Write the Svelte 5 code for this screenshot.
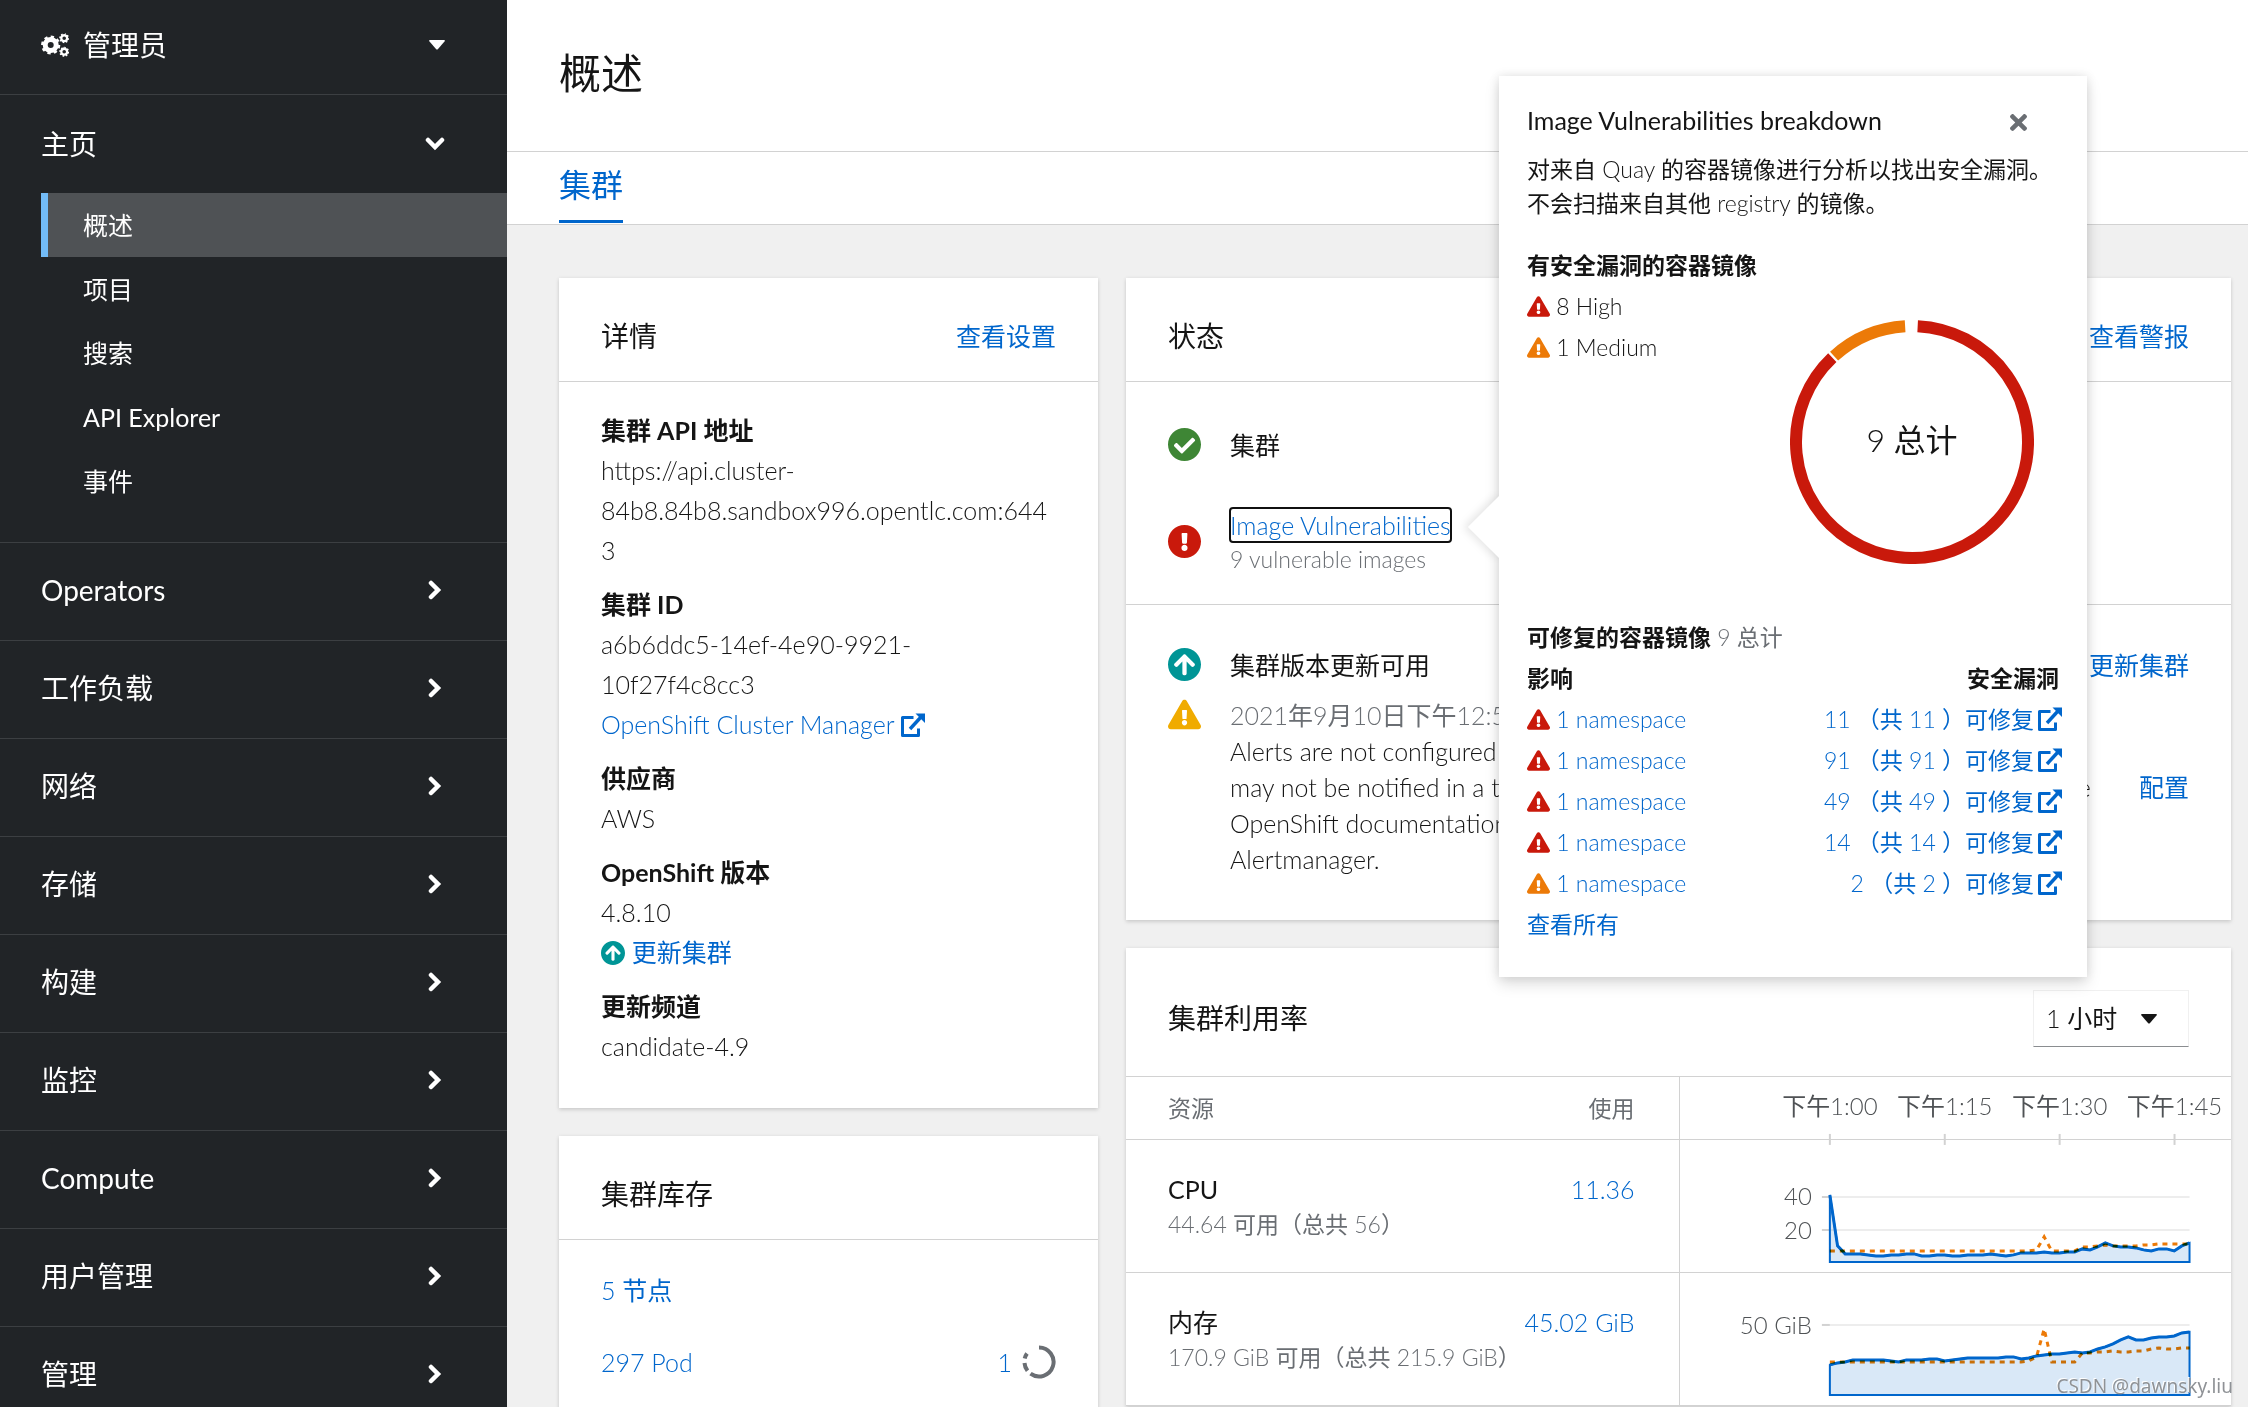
<script lang="ts">
  const sections = ['Operators', '工作负载', '网络', '存储', '构建', '监控', 'Compute', '用户管理', '管理'];
  const homeItems = ['概述', '项目', '搜索', 'API Explorer', '事件'];

  const fixable = [
    { level: 'high', count: 11 },
    { level: 'high', count: 91 },
    { level: 'high', count: 49 },
    { level: 'high', count: 14 },
    { level: 'medium', count: 2 },
  ];

  let active = $state('概述');
  let homeOpen = $state(true);
  let popoverOpen = $state(true);
  let duration = $state('1h');

  // chart geometry, one svg per table cell
  const X0 = 150;
  const X1 = 510;
  const STEP = (X1 - X0) / 47;

  const timeTicks = [
    { x: 150, label: '下午1:00' },
    { x: 265, label: '下午1:15' },
    { x: 380, label: '下午1:30' },
    { x: 495, label: '下午1:45' },
  ];

  // heights above the baseline, one sample each minute
  const cpuUsed = [67, 16, 8, 8, 8, 7, 6, 6, 7, 7, 8, 8, 6, 6, 7, 7, 6, 6, 7, 7, 7, 8, 7, 6, 7, 9, 9, 9, 10, 9, 9, 10, 10, 13, 12, 15, 19, 16, 15, 15, 14, 12, 11, 13, 13, 11, 16, 19];
  const cpuRequested = [...Array(27).fill(11), 12, 25, 11, 11, 11, 11, 15, 15, 16, 17, 16, 16, 16, 16, 17, 17, 18, 18, 18, 18, 18];
  const memUsed = [30, 32, 33, 35, 35, 35, 35, 35, 34, 33, 35, 35, 35, 36, 36, 34, 35, 36, 37, 37, 37, 37, 37, 38, 38, 36, 37, 39, 40, 41, 41, 42, 43, 42, 43, 46, 48, 51, 55, 58, 55, 55, 57, 58, 58, 59, 62, 63];
  const memRequested = [...Array(26).fill(33), 34, 38, 66, 33, 33, 33, 33, 42, 42, 43, 43, 44, 43, 43, 44, 44, 46, 47, 46, 46, 47, 47];

  function line(values: number[], base: number) {
    return values.map((v, i) => `${i ? 'L' : 'M'}${(X0 + i * STEP).toFixed(1)} ${base - v}`).join('');
  }

  function area(values: number[], base: number) {
    return `${line(values, base)}L${X1} ${base}L${X0} ${base}Z`;
  }

  function arc(from: number, to: number) {
    const point = (deg: number) => {
      const a = ((deg - 90) * Math.PI) / 180;
      return `${(122 + 116 * Math.cos(a)).toFixed(2)} ${(122 + 116 * Math.sin(a)).toFixed(2)}`;
    };
    return `M${point(from)}A116 116 0 ${to - from > 180 ? 1 : 0} 1 ${point(to)}`;
  }
</script>

{#snippet warning(kind: string)}
  <svg class="icon {kind}" viewBox="0 0 576 512" aria-hidden="true">
    <path d="M569.517 440.013C587.975 472.007 564.806 512 527.94 512H48.054c-36.937 0-59.999-40.055-41.577-71.987L246.423 23.985c18.467-32.009 64.72-31.951 83.154 0l239.94 416.028zM288 354c-25.405 0-46 20.595-46 46s20.595 46 46 46 46-20.595 46-46-20.595-46-46-46zm-43.673-165.346l7.418 136c.347 6.364 5.609 11.346 11.982 11.346h48.546c6.373 0 11.635-4.982 11.982-11.346l7.418-136c.375-6.874-5.098-12.654-11.982-12.654h-63.383c-6.884 0-12.356 5.78-11.981 12.654z" />
  </svg>
{/snippet}

{#snippet arrowUp()}
  <svg class="icon update" viewBox="8 8 496 496" aria-hidden="true">
    <path d="M8 256C8 119 119 8 256 8s248 111 248 248-111 248-248 248S8 393 8 256zm143.6 28.9l72.4-75.5V392c0 13.3 10.7 24 24 24h16c13.3 0 24-10.7 24-24V209.4l72.4 75.5c9.3 9.7 24.8 9.9 34.3.4l10.9-11c9.4-9.4 9.4-24.6 0-33.9L273 107.7c-9.4-9.4-24.6-9.4-33.9 0L106.3 240.4c-9.4 9.4-9.4 24.6 0 33.9l10.9 11c9.6 9.5 25.1 9.3 34.4-.4z" />
  </svg>
{/snippet}

{#snippet external()}
  <svg class="external" viewBox="0 0 24 24" aria-hidden="true">
    <path d="M12.5 4.500H1.500v18h16v-7" fill="none" stroke="currentColor" stroke-width="3" stroke-linejoin="round" />
    <path d="M9 16 20 4" fill="none" stroke="currentColor" stroke-width="3.4" />
    <path d="M14.5 0.500H24v9.500z" fill="currentColor" />
  </svg>
{/snippet}

{#snippet chevron(down: boolean)}
  <svg class="chevron" class:down viewBox="0 0 20 20" aria-hidden="true">
    <path d="M6 3l7 7-7 7" fill="none" stroke="currentColor" stroke-width="4.500" stroke-linecap="round" />
  </svg>
{/snippet}

{#snippet gear(cx: number, cy: number, r: number, w: number, tooth: number)}
  <circle {cx} {cy} {r} fill="none" stroke="currentColor" stroke-width={w} />
  <circle {cx} {cy} r={r + w / 2} fill="none" stroke="currentColor" stroke-width={tooth} pathLength="16" stroke-dasharray="1 1" />
{/snippet}

<div class="shell">
  <aside class="sidebar">
    <button class="perspective">
      <svg class="cogs" viewBox="0 0 28 28" aria-hidden="true">
        {@render gear(9.7, 14, 5.5, 5, 3.2)}
        {@render gear(23.2, 7.2, 2.9, 2.2, 2)}
        {@render gear(23.2, 20.8, 2.9, 2.2, 2)}
      </svg>
      <span>管理员</span>
      <svg class="caret" viewBox="0 0 16 10" aria-hidden="true"><path d="M1 0h14q1.500 0 .5 1.500L9 9q-1 1-2 0L.5 1.500Q-.5 0 1 0z" /></svg>
    </button>
    <nav>
      <div class="section">
        <button class="toggle" onclick={() => (homeOpen = !homeOpen)}>
          主页
          {@render chevron(homeOpen)}
        </button>
        {#if homeOpen}
          <ul>
            {#each homeItems as item}
              <li><a href="#{item}" class:active={active === item} onclick={() => (active = item)}>{item}</a></li>
            {/each}
          </ul>
        {/if}
      </div>
      {#each sections as name}
        <div class="section">
          <button class="toggle">
            {name}
            {@render chevron(false)}
          </button>
        </div>
      {/each}
    </nav>
  </aside>

  <main>
    <header><h1>概述</h1></header>
    <div class="tabs"><a href="#cluster">集群</a></div>

    <div class="dashboard">
      <div class="column">
        <section class="card">
          <div class="card-head">
            <h2>详情</h2>
            <a href="#settings">查看设置</a>
          </div>
          <dl>
            <dt>集群 API 地址</dt>
            <dd>https://api.cluster-84b8.84b8.sandbox996.opentlc.com:6443</dd>
            <dt>集群 ID</dt>
            <dd>a6b6ddc5-14ef-4e90-9921-10f27f4c8cc3</dd>
            <dd><a href="#manager">OpenShift Cluster Manager {@render external()}</a></dd>
            <dt>供应商</dt>
            <dd>AWS</dd>
            <dt>OpenShift 版本</dt>
            <dd>4.8.10</dd>
            <dd><a href="#update">{@render arrowUp()} 更新集群</a></dd>
            <dt>更新频道</dt>
            <dd>candidate-4.9</dd>
          </dl>
        </section>

        <section class="card stock">
          <div class="card-head"><h2>集群库存</h2></div>
          <div class="inventory">
            <a href="#nodes">5 节点</a>
          </div>
          <div class="inventory">
            <a href="#pods">297 Pod</a>
            <a class="progress" href="#pending">
              1
              <svg viewBox="0 0 34 34" aria-hidden="true">
                <path d="M17 2.500A14.500 14.500 0 1 1 8.500 28.700" />
                <path d="M5.500 25.800A14.500 14.500 0 0 1 2.500 18" />
                <path d="M2.700 13.500A14.500 14.500 0 0 1 5 8.500" />
              </svg>
            </a>
          </div>
        </section>
      </div>

      <div class="column">
        <section class="card">
          <div class="card-head">
            <h2>状态</h2>
            <a href="#alerts">查看警报</a>
          </div>
          <div class="health">
            <div class="health-item">
              <svg class="icon ok" viewBox="8 8 496 496" aria-hidden="true">
                <path d="M504 256c0 136.967-111.033 248-248 248S8 392.967 8 256 119.033 8 256 8s248 111.033 248 248zM227.314 387.314l184-184c6.248-6.248 6.248-16.379 0-22.627l-22.627-22.627c-6.248-6.249-16.379-6.249-22.628 0L216 308.118l-70.059-70.059c-6.248-6.248-16.379-6.248-22.628 0l-22.627 22.627c-6.248 6.248-6.248 16.379 0 22.627l104 104c6.249 6.249 16.379 6.249 22.628.001z" />
              </svg>
              <span>集群</span>
            </div>
            <div class="health-item">
              <svg class="icon high" viewBox="8 8 496 496" aria-hidden="true">
                <path d="M504 256c0 136.997-111.043 248-248 248S8 392.997 8 256C8 119.083 119.043 8 256 8s248 111.083 248 248zm-248 50c-25.405 0-46 20.595-46 46s20.595 46 46 46 46-20.595 46-46-20.595-46-46-46zm-43.673-165.346l7.418 136c.347 6.364 5.609 11.346 11.982 11.346h48.546c6.373 0 11.635-4.982 11.982-11.346l7.418-136c.375-6.874-5.098-12.654-11.982-12.654h-63.383c-6.884 0-12.356 5.78-11.981 12.654z" />
              </svg>
              <div class="vulnerabilities">
                <button class="vuln-link" onclick={() => (popoverOpen = !popoverOpen)}>Image Vulnerabilities</button>
                <small>9 vulnerable images</small>

                {#if popoverOpen}
                  <div class="popover" role="dialog" aria-label="Image Vulnerabilities breakdown">
                    <div class="popover-head">
                      <h3>Image Vulnerabilities breakdown</h3>
                      <button class="close" aria-label="Close" onclick={() => (popoverOpen = false)}>
                        <svg viewBox="0 80 352 352" aria-hidden="true">
                          <path d="M242.72 256l100.07-100.07c12.28-12.28 12.28-32.19 0-44.48l-22.24-22.24c-12.28-12.28-32.19-12.28-44.48 0L176 189.28 75.93 89.21c-12.28-12.28-32.19-12.28-44.48 0L9.21 111.45c-12.28 12.28-12.28 32.19 0 44.48L109.28 256 9.21 356.07c-12.28 12.28-12.28 32.19 0 44.48l22.24 22.24c12.28 12.28 32.2 12.28 44.48 0L176 322.72l100.07 100.07c12.28 12.28 32.2 12.28 44.48 0l22.24-22.24c12.28-12.28 12.28-32.19 0-44.48L242.72 256z" />
                        </svg>
                      </button>
                    </div>
                    <p>对来自 Quay 的容器镜像进行分析以找出安全漏洞。不会扫描来自其他 registry 的镜像。</p>
                    <div class="breakdown">
                      <div>
                        <h4>有安全漏洞的容器镜像</h4>
                        <div>{@render warning('high')} 8 High</div>
                        <div>{@render warning('medium')} 1 Medium</div>
                      </div>
                      <svg class="donut" viewBox="0 0 244 244">
                        <path class="high" d={arc(2.8, 316.6)} />
                        <path class="medium" d={arc(317.8, 356.6)} />
                        <text x="122" y="132">9 总计</text>
                      </svg>
                    </div>
                    <h4>可修复的容器镜像 <span class="muted">9 总计</span></h4>
                    <table class="fixable">
                      <thead>
                        <tr><th>影响</th><th>安全漏洞</th></tr>
                      </thead>
                      <tbody>
                        {#each fixable as row}
                          <tr>
                            <td>{@render warning(row.level)} <a href="#namespace">1 namespace</a></td>
                            <td><a href="#quay">{row.count} （共 {row.count} ）可修复{@render external()}</a></td>
                          </tr>
                        {/each}
                      </tbody>
                    </table>
                    <a href="#all">查看所有</a>
                  </div>
                {/if}
              </div>
            </div>
          </div>
          <div class="alerts">
            <div class="alert">
              {@render arrowUp()}
              <div class="alert-text">集群版本更新可用</div>
              <a href="#update">更新集群</a>
            </div>
            <div class="alert">
              {@render warning('warn')}
              <div class="alert-text">
                <time>2021年9月10日下午12:59</time>
                Alerts are not configured to be sent to a notification system, meaning that you<br />
                may not be notified in a timely fashion when important failures occur. Check the<br />
                OpenShift documentation to learn how to configure notifications with<br />
                Alertmanager.
              </div>
              <a class="configure" href="#configure">配置</a>
            </div>
          </div>
        </section>

        <section class="card">
          <div class="card-head tall">
            <h2>集群利用率</h2>
            <div class="select">
              <select aria-label="Duration" bind:value={duration}>
                <option value="1h">1 小时</option>
                <option value="6h">6 小时</option>
                <option value="24h">24 小时</option>
              </select>
              <svg class="caret" viewBox="0 0 16 10" aria-hidden="true"><path d="M1 0h14q1.500 0 .5 1.500L9 9q-1 1-2 0L.5 1.500Q-.5 0 1 0z" /></svg>
            </div>
          </div>
          <table class="usage">
            <colgroup><col class="resource" /><col class="used" /><col /></colgroup>
            <thead>
              <tr>
                <th>资源</th>
                <th>使用</th>
                <th class="chart">
                  <svg viewBox="0 0 552 62">
                    {#each timeTicks as tick}
                      <text x={tick.x} y="38" text-anchor="middle">{tick.label}</text>
                      <path class="tick" d="M{tick.x} 57v11" />
                    {/each}
                  </svg>
                </th>
              </tr>
            </thead>
            <tbody>
              <tr>
                <td><strong>CPU</strong><small>44.64 可用（总共 56）</small></td>
                <td><a href="#cpu">11.36</a></td>
                <td class="chart">
                  <svg viewBox="0 0 552 132">
                    <path class="grid" d="M150 57h360M150 90h360" />
                    <path class="tick" d="M142 57h8M142 90h8" />
                    <text x="132" y="65" text-anchor="end">40</text>
                    <text x="132" y="99" text-anchor="end">20</text>
                    <path class="area" d={area(cpuUsed, 122)} />
                    <path class="line" d={line(cpuUsed, 122)} />
                    <path class="requested" d={line(cpuRequested, 122)} />
                  </svg>
                </td>
              </tr>
              <tr>
                <td><strong>内存</strong><small>170.9 GiB 可用（总共 215.9 GiB）</small></td>
                <td><a href="#memory">45.02 GiB</a></td>
                <td class="chart">
                  <svg viewBox="0 0 552 132">
                    <path class="grid" d="M150 52h360" />
                    <path class="tick" d="M142 52h8" />
                    <text x="132" y="61" text-anchor="end">50 GiB</text>
                    <path class="area" d={area(memUsed, 122)} />
                    <path class="line" d={line(memUsed, 122)} />
                    <path class="requested" d={line(memRequested, 122)} />
                  </svg>
                </td>
              </tr>
            </tbody>
          </table>
        </section>
      </div>
    </div>
  </main>
  <div class="watermark">CSDN @dawnsky.liu</div>
</div>

<style>
  :global(body) { margin: 0; }

  .shell {
    --blue: #06c;
    --text: #151515;
    --muted: #6a6e73;
    --line: #d2d2d2;
    position: relative;
    display: flex;
    height: 100vh;
    overflow: hidden;
    background: #f0f0f0;
    color: var(--text);
    font-family: Lato, 'Noto Sans CJK SC', sans-serif;
    font-size: 25px;
    font-weight: 400;
    line-height: 36px;
  }

  h1, h2, h3, h4, p, ul, dl, dd { margin: 0; padding: 0; font-weight: 400; }
  ul { list-style: none; }
  a { color: var(--blue); text-decoration: none; }
  button, select { border: none; background: none; color: inherit; font: inherit; padding: 0; cursor: pointer; }
  svg { fill: currentColor; }
  small { display: block; color: var(--muted); font-size: 23px; line-height: 34px; }

  /* sidebar */
  .sidebar { flex: 0 0 507px; background: #212427; color: #fff; }

  .perspective {
    display: flex;
    align-items: center;
    gap: 14px;
    box-sizing: border-box;
    width: 100%;
    height: 95px;
    padding: 0 62px 4px 41px;
    border-bottom: 1px solid #3c3f42;
    font-size: 28px;
  }
  .cogs { width: 28px; height: 28px; }
  .caret { width: 16px; height: 10px; }
  .perspective .caret { margin-left: auto; }

  .section { border-bottom: 1px solid #3c3f42; }
  .section ul { padding: 1px 0 29px; }
  .toggle {
    display: flex;
    align-items: center;
    justify-content: space-between;
    width: 100%;
    height: 97px;
    padding: 0 62px 0 41px;
    font-size: 28px;
  }
  .section + .section .toggle { padding-bottom: 4px; }
  .chevron { width: 20px; height: 20px; }
  .chevron.down { transform: rotate(90deg); }

  .sidebar li a {
    display: block;
    margin-left: 41px;
    padding-left: 35px;
    border-left: 7px solid transparent;
    color: #fff;
    line-height: 64px;
  }
  .sidebar li a.active { border-color: #73bcf7; background: #4f5255; }

  /* main: light latin letters next to regular han */
  main { flex: 1; min-width: 0; font-family: 'Lato Light', Lato, 'Noto Sans CJK SC', sans-serif; }
  header { padding: 42px 52px 46px; border-bottom: 1px solid var(--line); background: #fff; }
  h1 { font-size: 42px; line-height: 63px; }

  .tabs { display: flex; height: 72px; padding: 0 52px; border-bottom: 1px solid var(--line); background: #fff; }
  .tabs a { height: 68px; border-bottom: 3px solid var(--blue); font-size: 32px; line-height: 66px; }

  .dashboard {
    display: grid;
    grid-template-columns: minmax(0, 539fr) minmax(0, 1105fr);
    gap: 28px;
    padding: 53px 17px 0 52px;
  }
  .column { display: flex; flex-direction: column; gap: 28px; }

  .card { background: #fff; box-shadow: 0 2px 4px rgba(3, 3, 3, 0.13), 0 0 4px rgba(3, 3, 3, 0.06); }
  .card-head {
    display: flex;
    align-items: center;
    justify-content: space-between;
    box-sizing: border-box;
    height: 104px;
    padding: 12px 42px 0;
    border-bottom: 1px solid var(--line);
  }
  .card-head.tall { height: 129px; }
  h2 { font-size: 28px; line-height: 42px; }

  dl { padding: 28px 42px 42px; line-height: 40px; }
  dt { margin-top: 14px; font-family: Lato, 'Noto Sans CJK SC', sans-serif; font-weight: 700; }
  dt:first-child { margin-top: 0; }
  dd { overflow-wrap: anywhere; }
  dd .icon { width: 24px; height: 24px; vertical-align: -3px; }
  .external { width: 24px; height: 24px; vertical-align: -3px; }

  .stock { padding-bottom: 42px; }
  .inventory { display: flex; justify-content: space-between; height: 72px; padding: 0 42px; line-height: 72px; }
  .inventory:nth-child(2) { padding-top: 14px; }
  .progress { display: flex; align-items: center; gap: 10px; }
  .progress svg { width: 34px; height: 34px; fill: none; stroke: var(--muted); stroke-width: 4; }

  .icon.high { fill: #c9190b; }
  .icon.medium { fill: #ec7a08; }
  .icon.warn { fill: #f0ab00; }
  .icon.ok { fill: #3e8635; }
  .icon.update { fill: #009596; }

  .health { padding: 28px 42px; border-bottom: 1px solid var(--line); }
  .health-item { display: flex; align-items: center; gap: 29px; min-height: 69px; }
  .health-item + .health-item { margin-top: 28px; }
  .health-item > .icon, .alert > .icon { flex: none; width: 33px; height: 33px; }
  .vulnerabilities { position: relative; }
  .vuln-link {
    display: block;
    height: 34px;
    border-radius: 3px;
    outline: 2px solid #101010;
    outline-offset: -1px;
    color: var(--blue);
    line-height: 34px;
  }

  .alerts { padding: 42px 42px 43px; }
  .alert { display: flex; gap: 29px; }
  .alert + .alert { margin-top: 14px; }
  .alert > .icon { margin-top: 1px; }
  .alert-text { flex: 1; min-width: 0; white-space: nowrap; }
  time { display: block; color: var(--muted); }
  .configure { align-self: center; }

  /* popover */
  .popover {
    position: absolute;
    z-index: 2;
    top: -432px;
    left: 269px;
    box-sizing: border-box;
    width: 588px;
    padding: 26px 28px 32px;
    background: #fff;
    box-shadow: 0 7px 14px rgba(3, 3, 3, 0.13), 0 0 10px rgba(3, 3, 3, 0.1);
    font-size: 23px;
    line-height: 41px;
  }
  .popover::before {
    content: '';
    position: absolute;
    top: 429px;
    left: -22px;
    width: 44px;
    height: 44px;
    background: #fff;
    box-shadow: -3px 3px 8px rgba(3, 3, 3, 0.1);
    clip-path: polygon(-20px -20px, calc(100% + 20px) calc(100% + 20px), -20px calc(100% + 20px));
    transform: rotate(45deg);
  }
  .popover-head { display: flex; align-items: center; justify-content: space-between; padding-right: 32px; }
  .popover-head h3 { font-family: Lato, sans-serif; font-size: 25px; line-height: 36px; }
  .close { height: 36px; color: var(--muted); }
  .close svg { width: 17px; height: 17px; }
  .popover p { margin: 14px 0 25px; line-height: 34px; }
  .popover h4 { font-size: 23px; font-weight: 700; }
  .popover .icon { width: 23px; height: 21px; vertical-align: -2px; }
  .popover .muted { color: var(--muted); font-weight: 400; }
  .breakdown { display: flex; justify-content: space-between; height: 372px; padding-right: 25px; }
  .donut { width: 244px; height: 244px; padding-top: 75px; margin-left: -100px; }
  .donut path { fill: none; stroke-width: 12; }
  .donut path.high { stroke: #c9190b; }
  .donut path.medium { stroke: #ec7a08; }
  .donut text { font-size: 32px; text-anchor: middle; }

  .fixable { width: 100%; border-spacing: 0; }
  .fixable th, .fixable td { padding: 0; text-align: left; }
  .fixable th:last-child, .fixable td:last-child { text-align: right; }
  .fixable .external { margin: 0 -3px 0 4px; }

  /* utilization */
  .select { position: relative; }
  select {
    box-sizing: border-box;
    width: 156px;
    height: 57px;
    padding: 0 12px;
    border: 1px solid #f0f0f0;
    border-bottom-color: #8a8d90;
    appearance: none;
  }
  .select .caret { position: absolute; top: 24px; right: 32px; pointer-events: none; }

  .usage { width: 100%; border-spacing: 0; table-layout: fixed; }
  .resource { width: 35%; }
  .used { width: 15%; }
  .usage th, .usage td { padding: 0 44px 0 0; border-bottom: 1px solid var(--line); font-weight: 400; text-align: right; }
  .usage th { color: var(--muted); font-size: 23px; }
  .usage td { padding-top: 31px; vertical-align: top; }
  .usage th:first-child, .usage td:first-child { padding-left: 42px; padding-right: 0; text-align: left; white-space: nowrap; }
  .usage strong { display: block; font-family: Lato, 'Noto Sans CJK SC', sans-serif; font-weight: 400; }
  .usage .chart { padding: 0; border-left: 1px solid var(--line); }
  .chart svg { display: block; width: 100%; overflow: visible; }
  .chart text { fill: #4f5255; font-size: 24px; }
  .chart path { fill: none; }
  .chart .grid { stroke: #ededed; stroke-width: 2; }
  .chart .tick { stroke: var(--line); stroke-width: 2; }
  .chart .area { fill: rgba(0, 102, 204, 0.15); stroke: var(--blue); stroke-width: 2; }
  .chart .line { stroke: var(--blue); stroke-width: 3; }
  .chart .requested { stroke: #ec7a08; stroke-width: 3; stroke-dasharray: 5 5; mix-blend-mode: multiply; }

  .watermark {
    position: absolute;
    right: 15px;
    bottom: 6px;
    z-index: 3;
    color: #8f9296;
    font-family: 'Noto Sans', sans-serif;
    font-size: 19px;
    line-height: 30px;
    text-shadow: -1px -1px 0 #fff;
  }
</style>
